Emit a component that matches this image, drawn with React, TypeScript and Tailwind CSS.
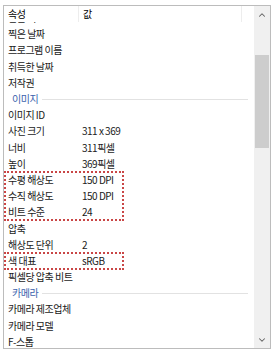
import { ChevronUp, ChevronDown } from "lucide-react";

type Row = { name: string; value?: string; group?: boolean };

const before: Row[] = [
  { name: "만든 이" },
  { name: "찍은 날짜" },
  { name: "프로그램 이름" },
  { name: "취득한 날짜" },
  { name: "저작권" },
  { name: "이미지", group: true },
  { name: "이미지 ID" },
  { name: "사진 크기", value: "311 x 369" },
  { name: "너비", value: "311픽셀" },
  { name: "높이", value: "369픽셀" },
];

const resolution: Row[] = [
  { name: "수평 해상도", value: "150 DPI" },
  { name: "수직 해상도", value: "150 DPI" },
  { name: "비트 수준", value: "24" },
];

const middle: Row[] = [
  { name: "압축" },
  { name: "해상도 단위", value: "2" },
];

const after: Row[] = [
  { name: "픽셀당 압축 비트" },
  { name: "카메라", group: true },
  { name: "카메라 제조업체" },
  { name: "카메라 모델" },
  { name: "F-스톱" },
];

function PropRow({ row }: { row: Row }) {
  if (row.group) {
    return (
      <div className="flex h-[16.2px] items-center pl-[8px] pr-[6px]">
        <span className="whitespace-nowrap text-[#3b62ad]">{row.name}</span>
        <div className="ml-[4px] h-px flex-1 bg-[#e2e2e2]" />
      </div>
    );
  }
  return (
    <div className="flex h-[16.2px] items-center whitespace-nowrap">
      <div className="w-[74px] shrink-0 pl-[4px] text-[#1a1a1a]">{row.name}</div>
      <div className="pl-[4px] text-[#1a1a1a]">{row.value}</div>
    </div>
  );
}

// red dotted annotation drawn over the rows
function Marked({ rows }: { rows: Row[] }) {
  return (
    <div className="relative">
      {rows.map((r) => (
        <PropRow key={r.name} row={r} />
      ))}
      <div className="absolute -top-[1px] -bottom-[1px] left-0 w-[120px] border-2 border-dotted border-[#c94646]" />
    </div>
  );
}

export default function App() {
  return (
    <div
      className="h-[354px] w-[272px] bg-white pl-[3px] pt-[5px]"
      style={{ fontFamily: '"Noto Sans CJK KR", "Noto Sans", sans-serif' }}
    >
      <div className="flex h-[344px] w-[268px] border border-[#bcbcbc] text-[10px] leading-none tracking-[-0.5px]">
        {/* list */}
        <div className="flex min-w-0 flex-1 flex-col">
          <div className="relative z-10 flex h-[16px] shrink-0 items-center bg-white">
            <div className="flex h-full w-[74px] items-center pl-[4px]">속성</div>
            <div className="h-full w-px bg-[#ededed]" />
            <div className="flex h-full w-[162px] items-center pl-[4px]">값</div>
            <div className="h-full w-px bg-[#ededed]" />
          </div>
          <div className="flex-1 overflow-hidden">
            <div className="-mt-[12px]">
              {before.map((r) => (
                <PropRow key={r.name} row={r} />
              ))}
              <Marked rows={resolution} />
              {middle.map((r) => (
                <PropRow key={r.name} row={r} />
              ))}
              <Marked rows={[{ name: "색 대표", value: "sRGB" }]} />
              {after.map((r) => (
                <PropRow key={r.name} row={r} />
              ))}
            </div>
          </div>
        </div>
        {/* scrollbar */}
        <div className="flex w-[16px] shrink-0 flex-col bg-[#f0f0f0]">
          <div className="flex h-[17px] items-center justify-center text-[#606060]">
            <ChevronUp size={10} strokeWidth={2.5} />
          </div>
          <div className="flex-1 px-[1px] pt-[32px]">
            <div className="h-[93px] bg-[#cdcdcd]" />
          </div>
          <div className="flex h-[17px] items-center justify-center text-[#606060]">
            <ChevronDown size={10} strokeWidth={2.5} />
          </div>
        </div>
      </div>
    </div>
  );
}
